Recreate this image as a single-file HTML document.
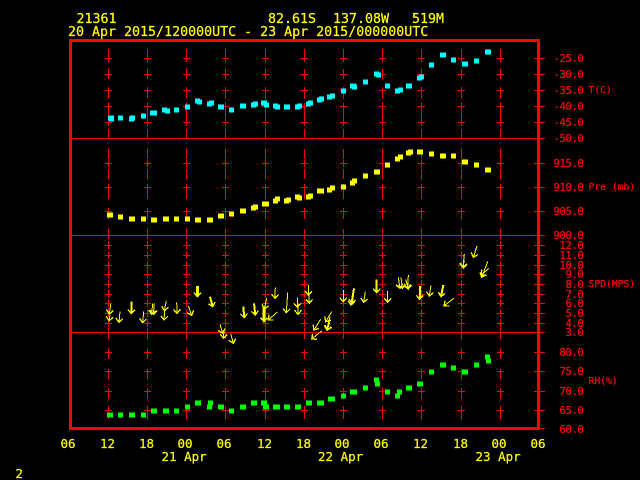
<!DOCTYPE html>
<html><head><meta charset="utf-8"><title>Station time series</title>
<style>
html,body{margin:0;padding:0;background:#000;width:640px;height:480px;overflow:hidden}
svg{display:block}
text{font-family:"DejaVu Sans Mono","Liberation Mono",monospace;white-space:pre}
.h{font-size:13.3px;fill:#ff0;stroke:#ff0;stroke-width:.2px}
.a{font-size:12.5px;fill:#ff0;stroke:#ff0;stroke-width:.2px}
.r{font-size:10.4px;letter-spacing:-.25px;fill:#f00;stroke:#f00;stroke-width:.25px;text-anchor:end}
.l{font-size:9.7px;fill:#f00;stroke:#f00;stroke-width:.2px}
</style></head><body>
<svg width="640" height="480" viewBox="0 0 640 480" xmlns="http://www.w3.org/2000/svg">
<defs>
<marker id="m" markerUnits="userSpaceOnUse" markerWidth="14" markerHeight="14" refX="7" refY="7" orient="auto" overflow="visible">
<path d="M3 3.5 L7 7 L3 10.5" fill="none" stroke="#ff0" stroke-width="1.3" shape-rendering="crispEdges"/>
</marker>
<g id="c" fill="none" stroke="#f00" stroke-width="1" shape-rendering="crispEdges">
<path d="M0 49V62M0 69V79M0 87V99M0 103V126M0 129V138M0 149V159M0 160V167M0 169V179M0 184V199M0 208V219M0 229V239M0 241V249M0 251V259M0 261V269M0 270V278M0 280V288M0 290V298M0 299V307M0 309V317M0 319V327M0 328V339M0 349V359M0 369V379M0 388V399M0 406V419"/>
<path d="M-3.5 58.5h7M-3.5 74.5h7M-3.5 90.5h7M-3.5 106.5h7M-3.5 122.5h7M-3.5 163.5h7M-3.5 187.5h7M-3.5 211.5h7M-3.5 245.5h7M-3.5 255.5h7M-3.5 265.5h7M-3.5 274.5h7M-3.5 284.5h7M-3.5 294.5h7M-3.5 303.5h7M-3.5 313.5h7M-3.5 323.5h7M-3.5 352.5h7M-3.5 371.5h7M-3.5 391.5h7M-3.5 410.5h7"/>
</g>
</defs>
<rect width="640" height="480" fill="#000"/>

<use href="#c" x="108.5"/><use href="#c" x="147.5"/><use href="#c" x="186.5"/><use href="#c" x="225.5"/><use href="#c" x="265.5"/><use href="#c" x="304.5"/><use href="#c" x="343.5"/><use href="#c" x="382.5"/><use href="#c" x="421.5"/><use href="#c" x="461.5"/><use href="#c" x="500.5"/>

<g fill="none" stroke="#f00" shape-rendering="crispEdges">
<path stroke-width="1" d="M72 138.5H545M72 235.5H545M72 332.5H545M534 58.5H545M534 74.5H545M534 90.5H545M534 106.5H545M534 122.5H545M534 163.5H545M534 187.5H545M534 211.5H545M534 245.5H545M534 255.5H545M534 265.5H545M534 274.5H545M534 284.5H545M534 294.5H545M534 303.5H545M534 313.5H545M534 323.5H545M534 352.5H545M534 371.5H545M534 391.5H545M534 410.5H545M534 428.5H545"/>
<rect x="70.5" y="40.5" width="468" height="388" stroke-width="3"/>
</g>

<!-- T(C) -->
<path fill="none" stroke="#0ff" stroke-width="5" shape-rendering="crispEdges" d="M108 118h6M109 119h5M118 118h5M129 119h5M130 118h5M141 116h5M150 113h7M162 110h5M165 111h5M174 110h5M185 107h5M195 101h5M197 102h5M207 104h5M209 103h5M218 107h6M229 110h5M240 106h6M251 105h5M253 104h5M261 103h6M264 105h5M273 106h5M275 107h5M284 107h6M295 107h5M297 106h5M306 104h5M308 103h5M317 100h5M319 99h5M327 97h5M330 96h5M341 91h5M350 86h6M352 87h5M363 82h5M374 74h5M376 75h5M385 86h5M395 91h5M398 90h5M406 86h6M417 78h5M419 77h5M429 65h5M440 55h6M451 60h5M462 64h6M474 61h5M485 52h6"/>
<!-- Pre -->
<path fill="none" stroke="#ff0" stroke-width="5" shape-rendering="crispEdges" d="M107 215h6M118 217h5M129 219h6M141 219h5M151 220h6M163 219h6M174 219h5M185 219h5M195 220h6M207 220h6M218 216h6M229 214h5M240 211h6M251 208h5M253 207h5M262 204h7M273 201h5M275 199h5M284 201h5M286 200h5M295 197h5M297 198h5M306 197h5M308 196h5M317 191h5M319 191h5M327 190h5M330 188h5M341 187h5M350 183h5M352 181h5M363 176h5M374 172h6M385 165h5M395 159h5M398 157h5M406 153h5M408 152h5M417 152h6M429 154h5M440 156h6M451 156h5M462 162h6M474 165h5M485 170h6"/>
<!-- RH -->
<path fill="none" stroke="#0f0" stroke-width="5" shape-rendering="crispEdges" d="M107 415h6M118 415h5M129 415h6M141 415h5M151 411h6M163 411h6M174 411h5M185 407h5M195 403h6M208 403h5M207 407h5M218 407h6M229 411h5M240 407h6M251 403h6M261 403h6M263 407h6M273 407h7M284 407h6M295 407h6M306 403h6M317 403h5M319 403h5M328 399h7M341 396h5M350 392h7M363 388h5M374 380h5M375 384h5M385 392h5M395 396h5M397 392h5M406 388h6M417 384h6M429 372h5M440 365h6M451 368h5M462 372h6M474 365h5M485 357h5M486 361h5"/>

<!-- wind arrows -->
<g fill="none" stroke="#ff0" stroke-width="1" marker-end="url(#m)" shape-rendering="crispEdges">
<path d="M110.7 304.3L109.3 314"/>
<path d="M110 315L109 320.7"/>
<path d="M120 311.7L119 322.3"/>
<path stroke-width="2" d="M131.7 301.7L131.3 313.7"/>
<path d="M143.7 311.7L142.7 322.7"/>
<path d="M152.7 303.3L151.7 314.3"/>
<path d="M154.3 303.3L153.3 314.3"/>
<path d="M166.3 300.7L164.3 310.7"/>
<path d="M164.7 310.7L164 320"/>
<path d="M176.7 302.3L177 313.3"/>
<path d="M188.3 306L191.7 315.3"/>
<path stroke-width="3" d="M197.7 286L197.3 296.7"/>
<path stroke-width="2" d="M210 296.7L212.7 306.7"/>
<path stroke-width="2" d="M243.3 306.7L244.3 317.7"/>
<path stroke-width="2" d="M254 303.3L255.3 315"/>
<path d="M266.7 298L264.5 309"/>
<path stroke-width="3" d="M264 306.7L264 321.7"/>
<path d="M277.7 311.7L268.3 320"/>
<path d="M275.3 287.3L275 298.3"/>
<path d="M287.7 292.3L286.3 312.7"/>
<path d="M297.3 297.3L297.3 307.3"/>
<path d="M298 303.3L298 314.3"/>
<path d="M308.7 285L308.3 295"/>
<path d="M309 293.3L309.3 303.3"/>
<path d="M320.7 319.3L314 330"/>
<path d="M321.7 331L311.7 339"/>
<path d="M331.7 311.7L325.7 321.7"/>
<path d="M330 316.7L326.7 330"/>
<path d="M330 321.7L327.3 330"/>
<path d="M220 324.3L222.7 333.3"/>
<path d="M224 331.7L223.3 338.3"/>
<path d="M230.7 333.3L233.3 343.3"/>
<path d="M343.3 290L343.3 301.7"/>
<path stroke-width="2" d="M354 288.3L351.7 303.3"/>
<path d="M352.3 295L351 305"/>
<path d="M365.3 291.7L363.7 302.3"/>
<path stroke-width="2" d="M376.7 279.3L376.7 292.7"/>
<path d="M387.7 291L387.7 302.3"/>
<path d="M398.3 277.3L400 288.3"/>
<path d="M401 277.3L402.3 288.3"/>
<path d="M408.3 275L408 289"/>
<path d="M405.7 279.3L408.3 289"/>
<path stroke-width="2" d="M420 286L419.7 299.3"/>
<path d="M431 285.3L429.3 296"/>
<path stroke-width="2" d="M443.3 285L441 296.7"/>
<path d="M454 298.3L444 305.7"/>
<path d="M464.3 254L463 267.3"/>
<path d="M464 260L463.3 268"/>
<path d="M477 246L473.3 257.3"/>
<path d="M487.7 261.7L481.7 277.3"/>
<path d="M489 268.3L481 275"/>
</g>

<!-- header -->
<text class="h" x="76.5" y="23">21361</text>
<text class="h" x="268" y="23">82.61S</text>
<text class="h" x="333" y="23">137.08W</text>
<text class="h" x="412" y="23">519M</text>
<text class="h" x="68" y="36">20 Apr 2015/120000UTC - 23 Apr 2015/000000UTC</text>

<!-- x axis -->
<text class="a" x="60.5" y="448">06</text>
<text class="a" x="100" y="448">12</text>
<text class="a" x="139" y="448">18</text>
<text class="a" x="177.5" y="448">00</text>
<text class="a" x="216.5" y="448">06</text>
<text class="a" x="257" y="448">12</text>
<text class="a" x="296" y="448">18</text>
<text class="a" x="334.5" y="448">00</text>
<text class="a" x="373.5" y="448">06</text>
<text class="a" x="413" y="448">12</text>
<text class="a" x="453" y="448">18</text>
<text class="a" x="491.5" y="448">00</text>
<text class="a" x="530.5" y="448">06</text>
<text class="a" x="161.5" y="461">21 Apr</text>
<text class="a" x="318" y="461">22 Apr</text>
<text class="a" x="475.5" y="461">23 Apr</text>
<text class="a" x="15.5" y="478">2</text>

<!-- right scale -->
<text class="r" x="583.5" y="62">-25.0</text>
<text class="r" x="583.5" y="78">-30.0</text>
<text class="r" x="583.5" y="94">-35.0</text>
<text class="r" x="583.5" y="110">-40.0</text>
<text class="r" x="583.5" y="126">-45.0</text>
<text class="r" x="583.5" y="142">-50.0</text>
<text class="r" x="583.5" y="167">915.0</text>
<text class="r" x="583.5" y="191">910.0</text>
<text class="r" x="583.5" y="215">905.0</text>
<text class="r" x="583.5" y="239">900.0</text>
<text class="r" x="583.5" y="249">12.0</text>
<text class="r" x="583.5" y="259">11.0</text>
<text class="r" x="583.5" y="269">10.0</text>
<text class="r" x="583.5" y="278">9.0</text>
<text class="r" x="583.5" y="288">8.0</text>
<text class="r" x="583.5" y="298">7.0</text>
<text class="r" x="583.5" y="307">6.0</text>
<text class="r" x="583.5" y="317">5.0</text>
<text class="r" x="583.5" y="327">4.0</text>
<text class="r" x="583.5" y="336">3.0</text>
<text class="r" x="583.5" y="356">80.0</text>
<text class="r" x="583.5" y="375">75.0</text>
<text class="r" x="583.5" y="395">70.0</text>
<text class="r" x="583.5" y="414">65.0</text>
<text class="r" x="583.5" y="433">60.0</text>

<text class="l" x="588.5" y="93">T(C)</text>
<text class="l" x="588.5" y="190">Pre (mb)</text>
<text class="l" x="588.5" y="287">SPD(MPS)</text>
<text class="l" x="588.5" y="384">RH(%)</text>
</svg>
</body></html>
